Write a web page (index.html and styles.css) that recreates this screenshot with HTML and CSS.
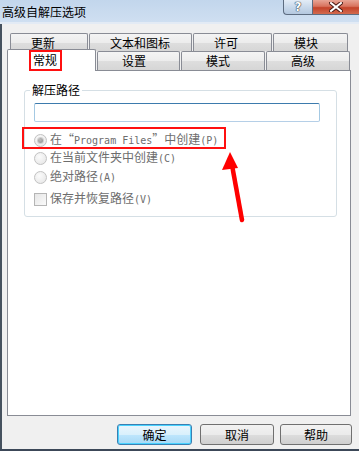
FILE: index.html
```html
<!DOCTYPE html>
<html lang="zh-CN">
<head>
  <meta charset="UTF-8">
  <meta name="viewport" content="width=device-width, initial-scale=1.0">
  <title>高级自解压选项</title>
  <link rel="stylesheet" href="styles.css">
</head>
<body>
  <div class="window">
    <div class="titlebar">
      <span class="title">高级自解压选项</span>
      <div class="caption">
        <div class="cap help">?</div>
        <div class="cap close">
          <svg width="14" height="10" viewBox="0 0 14 10">
            <path d="M2 1 L12 9 M12 1 L2 9" stroke="#4a1a14" stroke-width="4" stroke-linecap="square"/>
            <path d="M2 1 L12 9 M12 1 L2 9" stroke="#ffffff" stroke-width="2" stroke-linecap="square"/>
          </svg>
        </div>
      </div>
    </div>

    <div class="client">
      <div class="tabs">
        <div class="tab-row back">
          <div class="tab w78">更新</div>
          <div class="tab w103">文本和图标</div>
          <div class="tab w79">许可</div>
          <div class="tab w75">模块</div>
        </div>
        <div class="tab-row front">
          <div class="tab selected"><span>常规</span></div>
          <div class="tab w83">设置</div>
          <div class="tab w84">模式</div>
          <div class="tab w84">高级</div>
        </div>
      </div>

      <div class="page">
        <fieldset class="group">
          <legend>解压路径</legend>
          <div class="path-input"></div>
          <div class="option first">
            <span class="radio checked"></span>
            <span class="label">在<span class="q ql">“</span><span class="mono">Program Files</span><span class="q qr">”</span>中创建<span class="mono">(P)</span></span>
          </div>
          <div class="option">
            <span class="radio"></span>
            <span class="label">在当前文件夹中创建<span class="mono">(C)</span></span>
          </div>
          <div class="option third">
            <span class="radio"></span>
            <span class="label">绝对路径<span class="mono">(A)</span></span>
          </div>
          <div class="option check-row">
            <span class="check"></span>
            <span class="label">保存并恢复路径<span class="mono">(V)</span></span>
          </div>
        </fieldset>

        <div class="mark-box"></div>
        <svg class="mark-arrow" width="40" height="76" viewBox="0 0 40 76">
          <path d="M17 16 L27 71" stroke="#ff0000" stroke-width="4.5" stroke-linecap="round"/>
          <polygon points="15,3 7,21 23,19" fill="#ff0000"/>
        </svg>
      </div>

      <div class="buttons">
        <div class="btn default">确定</div>
        <div class="btn cancel">取消</div>
        <div class="btn help-btn">帮助</div>
      </div>
    </div>
  </div>
</body>
</html>
```

FILE: styles.css
```css
body {
  margin: 0;
  padding: 0;
  font-family: "Noto Sans CJK SC", sans-serif;
  font-size: 12px;
  color: #000;
  background: #f0f0f0;
}

.window {
  width: 359px;
  height: 451px;
  box-sizing: border-box;
  display: flex;
  flex-direction: column;
  border-bottom: 2px solid #3c4858;
  overflow: hidden;
}

/* Title bar */
.titlebar {
  height: 22px;
  flex: none;
  display: flex;
  justify-content: space-between;
  background: linear-gradient(#c2d6ec, #cfdff1);
  border-bottom: 2px solid #e3ebf5;
}

.title {
  padding-left: 2px;
  line-height: 23px;
  font-size: 12px;
}

.caption {
  display: flex;
  align-items: flex-start;
}

.cap {
  height: 15px;
  box-sizing: border-box;
  border: 1px solid #5d6c80;
  border-top: none;
  display: flex;
  align-items: center;
  justify-content: center;
}

.help {
  width: 29px;
  border-right: none;
  border-radius: 0 0 0 4px;
  background: linear-gradient(#e3ecf6, #c9d9eb 50%, #b4c8df);
  color: #fff;
  font-family: "DejaVu Sans", sans-serif;
  font-weight: bold;
  font-size: 12px;
  line-height: 14px;
  text-shadow: 0 0 1px #2c3a4c, 0 0 1px #2c3a4c, 0 0 1px #2c3a4c;
}

.close {
  width: 47px;
  background: linear-gradient(#e8a596, #d8735e 45%, #c4432a 55%, #d26a4e);
  border-right: none;
}

/* Client area */
.client {
  flex: 1;
  border-left: 2px solid #46525f;
  padding: 9px 0 0 5px;
  background: #f0f0f0;
}

.tab-row {
  display: flex;
}

.tab {
  box-sizing: border-box;
  border: 1px solid #898c95;
  border-bottom: none;
  border-radius: 2px 2px 0 0;
  background: linear-gradient(#f4f4f4, #ececec 50%, #dedede 51%, #d6d6d6);
  line-height: 17px;
  padding-left: 20px;
  margin-right: 1px;
  white-space: nowrap;
}

.back {
  margin-left: 3px;
  height: 18px;
}

.back .tab {
  height: 18px;
}

.front {
  height: 19px;
}

.front .tab {
  height: 19px;
  line-height: 18px;
  padding-left: 24px;
}

.w75 { width: 75px; }
.w78 { width: 78px; }
.w79 { width: 79px; }
.w83 { width: 83px; }
.w84 { width: 84px; }
.w103 { width: 103px; }

.front .selected {
  width: 89px;
  height: 22px;
  margin-top: -2px;
  margin-bottom: -1px;
  background: #fff;
  position: relative;
  z-index: 1;
  padding-left: 23px;
  line-height: 20px;
}

.selected span {
  display: inline-block;
  line-height: 16px;
  padding: 0 3px 0 2px;
  outline: 2px solid #ff1010;
  outline-offset: 0;
  border-bottom: 1px solid transparent;
}

/* Page */
.page {
  position: relative;
  width: 344px;
  height: 346px;
  box-sizing: border-box;
  border: 1px solid #898c95;
  background: #fff;
}

.group {
  margin: 11px 0 0 16px;
  width: 313px;
  box-sizing: border-box;
  border: 1px solid #d5dfe5;
  border-radius: 3px;
  padding: 0 0 8px 5px;
}

.group legend {
  padding: 0 2px;
  line-height: 16px;
  color: #000;
}

.path-input {
  margin: 5px 0 0 4px;
  width: 286px;
  height: 19px;
  box-sizing: border-box;
  border: 1px solid;
  border-color: #3d7bad #a4c9e3 #b5cfe7 #a4c9e3;
  border-radius: 2px;
  background: #fff;
}

.option {
  display: flex;
  align-items: center;
  height: 18px;
  margin-left: 4px;
  color: #6d6d6d;
  line-height: 16px;
}

.option.first {
  margin-top: 9px;
}

.option.third {
  margin-top: 1px;
}

.option.check-row {
  margin-top: 4px;
}

.radio {
  width: 13px;
  height: 13px;
  box-sizing: border-box;
  border-radius: 50%;
  border: 1px solid #c2c2c2;
  background: radial-gradient(circle at 40% 35%, #fbfbfb, #e4e4e4);
  margin-right: 3px;
  display: flex;
  align-items: center;
  justify-content: center;
}

.radio.checked::after {
  content: "";
  width: 5px;
  height: 5px;
  border-radius: 50%;
  background: radial-gradient(circle at 40% 35%, #bdbdbd, #8c8c8c);
  box-shadow: 0 0 0 1px #d0d0d0;
}

.check {
  width: 13px;
  height: 13px;
  box-sizing: border-box;
  border: 1px solid #b5b5b5;
  background: linear-gradient(135deg, #e6e6e6, #fafafa);
  margin-right: 3px;
}

.mono {
  font-family: "DejaVu Sans Mono", monospace;
  font-size: 10px;
}

.q {
  display: inline-block;
  width: 12px;
}

.ql {
  text-align: right;
}

.qr {
  text-align: left;
}

/* Annotations */
.mark-box {
  position: absolute;
  left: 14px;
  top: 56px;
  width: 204px;
  height: 22px;
  box-sizing: border-box;
  border: 2px solid #ff1010;
}

.mark-arrow {
  position: absolute;
  left: 207px;
  top: 78px;
}

/* Buttons */
.buttons {
  display: flex;
  justify-content: flex-end;
  padding-right: 7px;
  margin-top: 8px;
}

.btn {
  height: 21px;
  box-sizing: border-box;
  border: 1px solid #707070;
  border-radius: 3px;
  background: linear-gradient(#f2f2f2, #ebebeb 50%, #dddddd 51%, #cfcfcf);
  text-align: center;
  line-height: 19px;
}

.default {
  width: 75px;
  margin-right: 8px;
  border-color: #3c7fb1;
  background: linear-gradient(#eaf6fd, #d9f0fc 50%, #bee6fd 51%, #a7d9f5);
  box-shadow: inset 0 0 0 1px #48d2ff;
}

.cancel {
  width: 74px;
  margin-right: 6px;
}

.help-btn {
  width: 72px;
}
```
